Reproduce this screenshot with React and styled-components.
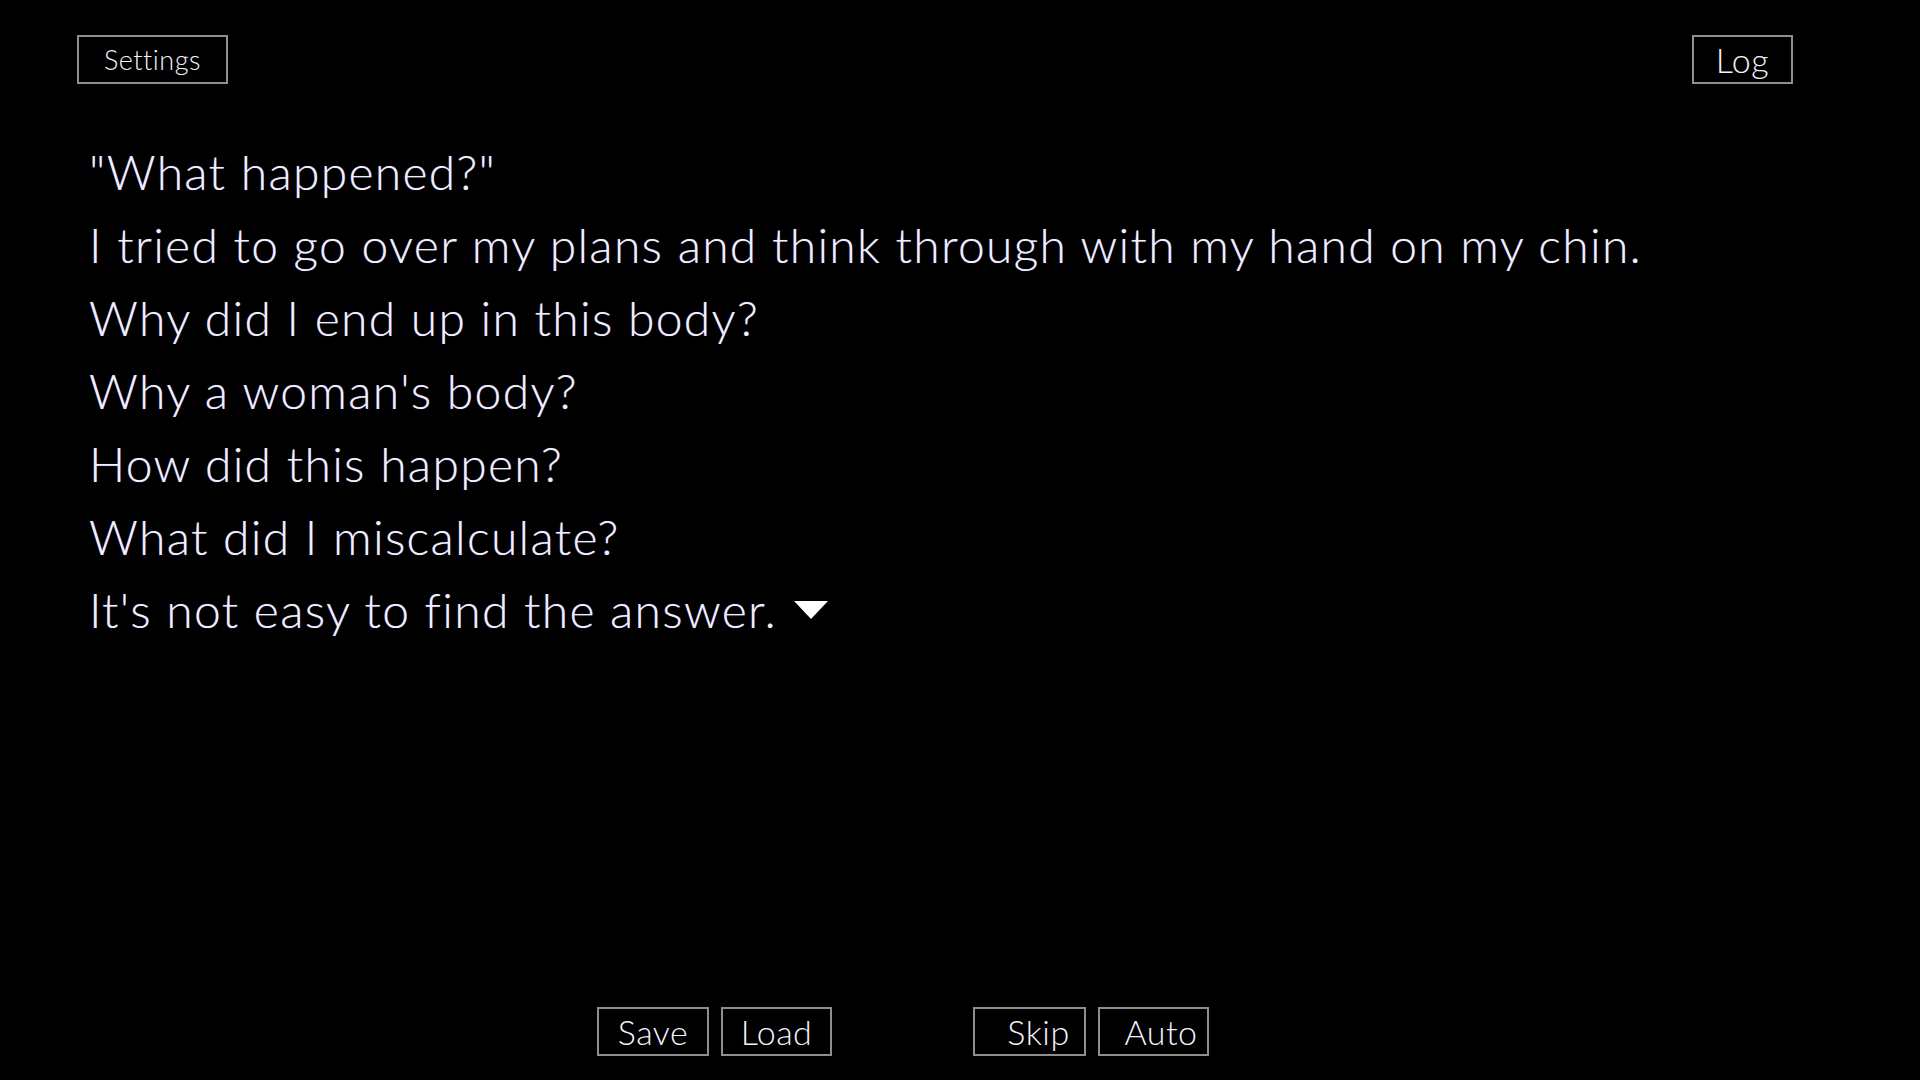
import React from 'react';
import styled, { createGlobalStyle } from 'styled-components';

const GlobalStyle = createGlobalStyle`
  html, body {
    margin: 0;
    padding: 0;
    background: #000;
  }
  body {
    font-family: Lato, "Open Sans", sans-serif;
    color: #f1efff;
  }
`;

const lines = [
  '"What happened?"',
  'I tried to go over my plans and think through with my hand on my chin.',
  'Why did I end up in this body?',
  "Why a woman's body?",
  'How did this happen?',
  'What did I miscalculate?',
  "It's not easy to find the answer.",
];

const App = () => {
  return (
    <Screen>
      <GlobalStyle />
      <TopBar>
        <MenuButton size="small" width="151px">Settings</MenuButton>
        <MenuButton width="101px">Log</MenuButton>
      </TopBar>

      <Dialogue>
        {lines.map((line, i) => (
          <Line key={i}>
            {line}
            {i === lines.length - 1 && <NextMarker />}
          </Line>
        ))}
      </Dialogue>

      <BottomBar>
        <ButtonGroup>
          <MenuButton width="112px">Save</MenuButton>
          <MenuButton width="111px">Load</MenuButton>
        </ButtonGroup>
        <ButtonGroup>
          <MenuButton width="113px" offset="18px">Skip</MenuButton>
          <MenuButton width="111px" offset="15px">Auto</MenuButton>
        </ButtonGroup>
      </BottomBar>
    </Screen>
  );
};

export default App;

const Screen = styled.div`
  width: 1920px;
  height: 1080px;
  display: flex;
  flex-direction: column;
  background: #000;
  overflow: hidden;
`;

const TopBar = styled.div`
  display: flex;
  justify-content: space-between;
  align-items: center;
  padding: 35px 127px 0 77px;
`;

const MenuButton = styled.button`
  box-sizing: border-box;
  width: ${(p) => p.width || 'auto'};
  height: 49px;
  padding: 0 0 0 ${(p) => p.offset || '0px'};
  background: #000;
  border: 2px solid #8e8e8e;
  border-radius: 0;
  color: #f4f2ff;
  font-family: Lato, "Open Sans", sans-serif;
  font-weight: 300;
  font-size: ${(p) => (p.size === 'small' ? '27px' : '34px')};
  letter-spacing: 0.5px;
  line-height: 1;
  display: flex;
  align-items: center;
  justify-content: center;
  cursor: pointer;
`;

const Dialogue = styled.div`
  flex: 1;
  padding: 51px 0 0 89px;
`;

const Line = styled.div`
  display: flex;
  align-items: center;
  font-size: 48px;
  font-weight: 300;
  line-height: 73px;
  letter-spacing: 1.3px;
  white-space: nowrap;
  color: #f1efff;
  text-shadow: 0 0 1px rgba(170, 160, 255, 0.6);
`;

const NextMarker = styled.span`
  width: 0;
  height: 0;
  margin-left: 17px;
  border-left: 17px solid transparent;
  border-right: 17px solid transparent;
  border-top: 18px solid #fff;
`;

const BottomBar = styled.div`
  display: flex;
  gap: 141px;
  padding: 0 0 24px 597px;
`;

const ButtonGroup = styled.div`
  display: flex;
  gap: 12px;
`;
